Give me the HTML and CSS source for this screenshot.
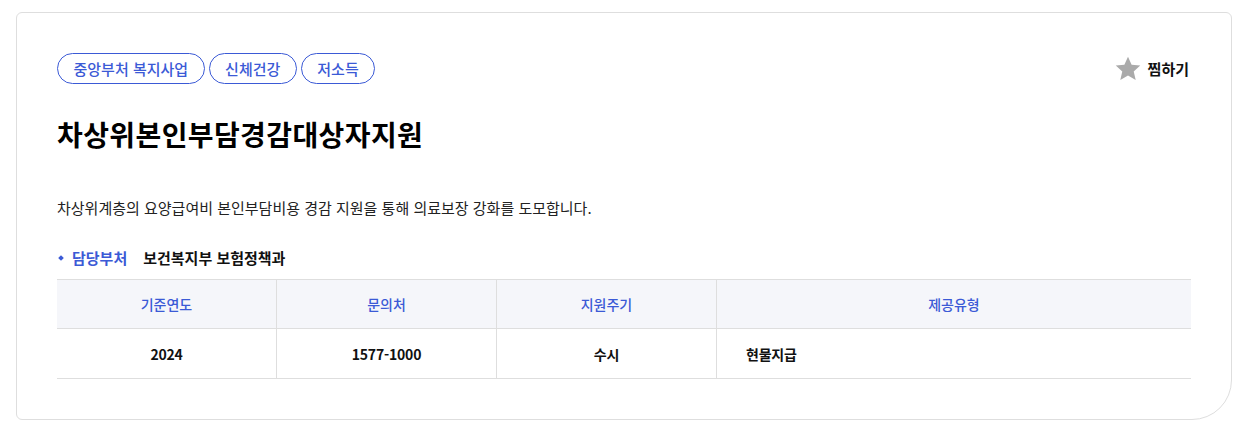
FILE: index.html
```html
<!DOCTYPE html>
<html lang="ko">
<head>
    <meta charset="UTF-8">
    <meta name="viewport" content="width=device-width, initial-scale=1.0">
    <title>차상위본인부담경감대상자지원</title>
    <link rel="stylesheet" href="styles.css">
</head>
<body>
    <div class="card">
        <div class="card-top">
            <div class="tags">
                <span class="tag">중앙부처 복지사업</span>
                <span class="tag">신체건강</span>
                <span class="tag">저소득</span>
            </div>
            <button class="wish">
                <svg width="28" height="28" viewBox="0 0 24 24"><path d="M12 1.5l3.1 6.9 7.4.7-5.6 5 1.7 7.4L12 17.6l-6.6 3.9 1.7-7.4-5.6-5 7.4-.7z" fill="#aaaaaa"/></svg>
                찜하기
            </button>
        </div>

        <h1 class="title">차상위본인부담경감대상자지원</h1>
        <p class="desc">차상위계층의 요양급여비 본인부담비용 경감 지원을 통해 의료보장 강화를 도모합니다.</p>

        <div class="dept">
            <span class="dept-label">담당부처</span>
            <span class="dept-name">보건복지부 보험정책과</span>
        </div>

        <table class="info">
            <thead>
                <tr>
                    <th class="c1">기준연도</th>
                    <th class="c2">문의처</th>
                    <th class="c3">지원주기</th>
                    <th>제공유형</th>
                </tr>
            </thead>
            <tbody>
                <tr>
                    <td>2024</td>
                    <td>1577-1000</td>
                    <td>수시</td>
                    <td class="left">현물지급</td>
                </tr>
            </tbody>
        </table>
    </div>
</body>
</html>
```

FILE: styles.css
```css
body {
    margin: 0;
    padding: 12px 12px 12px 16px;
    font-family: "Noto Sans CJK KR", "Noto Sans", sans-serif;
    color: #111;
    background: #fff;
}
.card {
    width: 1134px;
    border: 1px solid #dedede;
    border-radius: 6px 6px 40px 6px;
    padding: 40px;
}
.card-top {
    display: flex;
    justify-content: space-between;
    align-items: center;
}
.tags {
    display: flex;
    gap: 4px;
}
.tag {
    height: 29px;
    line-height: 29px;
    padding: 0 15.5px;
    border: 1px solid #3b5ad6;
    border-radius: 16px;
    color: #3b5ad6;
    font-size: 15px;
    font-weight: 500;
}
.wish {
    display: flex;
    align-items: center;
    gap: 6px;
    margin-right: 2px;
    border: none;
    background: none;
    padding: 0;
    font-family: inherit;
    font-size: 15px;
    font-weight: 700;
    color: #111;
    cursor: pointer;
}
.title {
    margin: 30px 0 0;
    font-size: 28px;
    line-height: 40px;
    font-weight: 700;
    letter-spacing: 0.4px;
    color: #000;
}
.desc {
    margin: 43px 0 0;
    font-size: 15px;
    line-height: 22px;
    color: #222;
}
.dept {
    margin-top: 28px;
    display: flex;
    align-items: center;
    font-size: 15px;
    font-weight: 700;
    line-height: 22px;
}
.dept-label {
    position: relative;
    padding-left: 15px;
    color: #3b5ad6;
    margin-right: 16px;
}
.dept-label::before {
    content: "";
    position: absolute;
    left: 2px;
    top: 9px;
    width: 4px;
    height: 4px;
    background: #3b5ad6;
    transform: rotate(45deg);
}
.info {
    margin-top: 10px;
    width: 100%;
    border-collapse: collapse;
    border-top: 1px solid #dedede;
    table-layout: fixed;
}
.info th, .info td {
    padding: 0;
    text-align: center;
    border-bottom: 1px solid #dedede;
    border-left: 1px solid #dedede;
}
.info th:first-child, .info td:first-child {
    border-left: none;
}
.info th {
    height: 48px;
    background: #f5f6fa;
    color: #3b5ad6;
    font-size: 14px;
    font-weight: 500;
}
.info td {
    height: 49px;
    font-size: 14px;
    font-weight: 700;
    letter-spacing: -0.2px;
    color: #111;
}
.info .c1 { width: 219px; }
.info .c2 { width: 219px; }
.info .c3 { width: 219px; }
.info td.left {
    text-align: left;
    padding-left: 29px;
}
```
